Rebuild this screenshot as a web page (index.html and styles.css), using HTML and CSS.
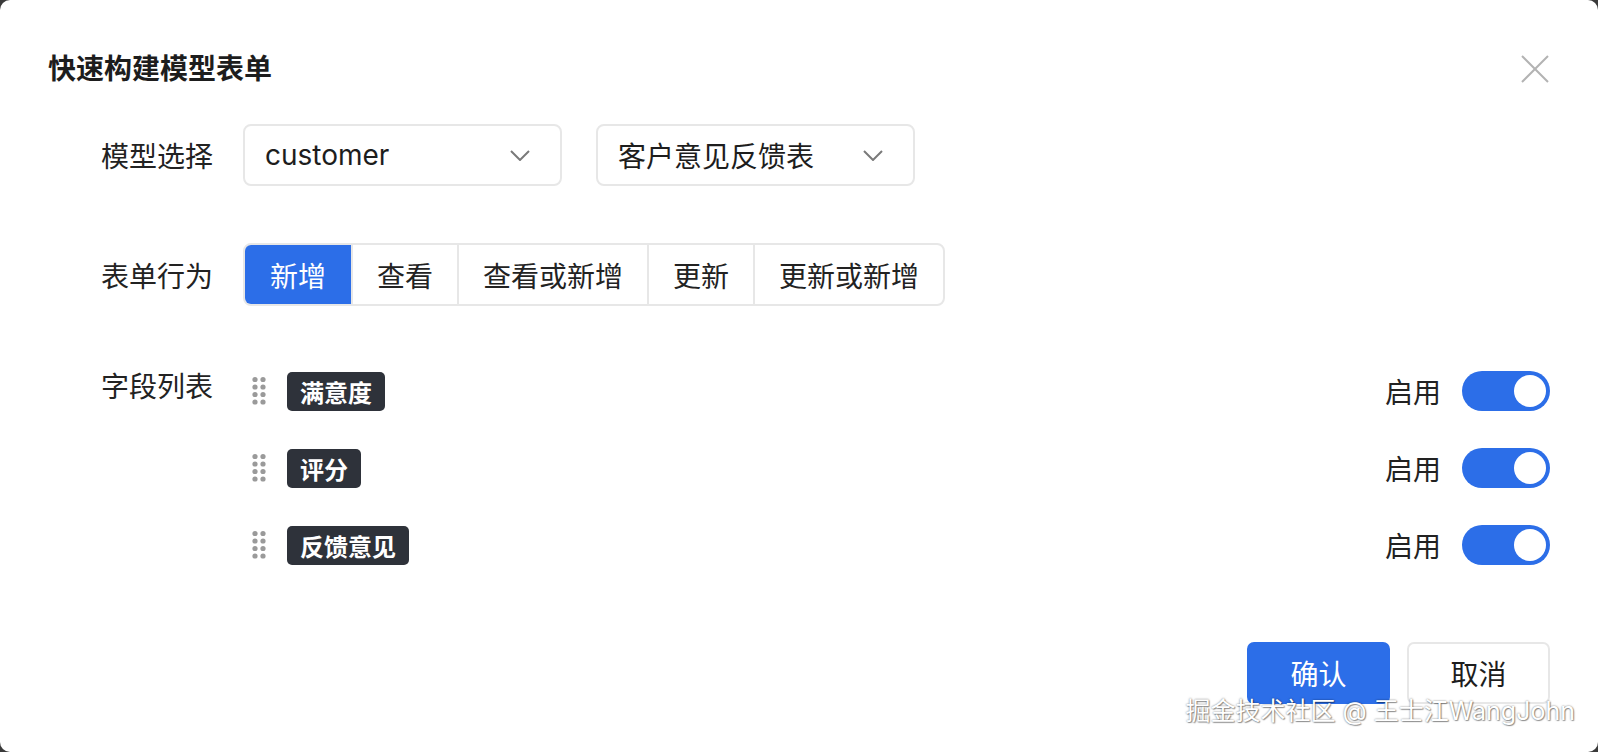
FILE: index.html
```html
<!DOCTYPE html>
<html lang="zh-CN">
<head>
    <meta charset="UTF-8">
    <meta name="viewport" content="width=device-width, initial-scale=1.0">
    <title>快速构建模型表单</title>
    <link rel="stylesheet" href="styles.css">
</head>
<body>
    <div class="dialog">
        <div class="dialog-header">
            <h2 class="dialog-title">快速构建模型表单</h2>
            <button class="close-btn" aria-label="关闭">
                <svg width="28" height="28" viewBox="0 0 28 28"><path d="M1 1L27 27M27 1L1 27" stroke="#b3b3b3" stroke-width="2" fill="none"/></svg>
            </button>
        </div>

        <div class="form">
            <div class="form-row row-select">
                <label class="form-label">模型选择</label>
                <div class="form-control selects">
                    <div class="select">
                        <span>customer</span>
                        <svg class="chevron" width="20" height="11" viewBox="0 0 20 11"><path d="M1 1L10 10L19 1" stroke="#7a7a7a" stroke-width="2" fill="none"/></svg>
                    </div>
                    <div class="select">
                        <span>客户意见反馈表</span>
                        <svg class="chevron" width="20" height="11" viewBox="0 0 20 11"><path d="M1 1L10 10L19 1" stroke="#7a7a7a" stroke-width="2" fill="none"/></svg>
                    </div>
                </div>
            </div>

            <div class="form-row row-action">
                <label class="form-label">表单行为</label>
                <div class="form-control">
                    <div class="segmented">
                        <div class="segment active">新增</div>
                        <div class="segment">查看</div>
                        <div class="segment">查看或新增</div>
                        <div class="segment">更新</div>
                        <div class="segment">更新或新增</div>
                    </div>
                </div>
            </div>

            <div class="form-row row-fields">
                <label class="form-label">字段列表</label>
                <div class="form-control field-list">
                    <div class="field-item">
                        <svg class="handle" width="14" height="30" viewBox="0 0 14 30">
                            <g fill="#9a9a9a"><circle cx="3" cy="3.5" r="2.6"/><circle cx="11" cy="3.5" r="2.6"/><circle cx="3" cy="11" r="2.6"/><circle cx="11" cy="11" r="2.6"/><circle cx="3" cy="18.5" r="2.6"/><circle cx="11" cy="18.5" r="2.6"/><circle cx="3" cy="26" r="2.6"/><circle cx="11" cy="26" r="2.6"/></g>
                        </svg>
                        <span class="tag">满意度</span>
                        <span class="switch-label">启用</span>
                        <span class="switch on"><span class="knob"></span></span>
                    </div>
                    <div class="field-item">
                        <svg class="handle" width="14" height="30" viewBox="0 0 14 30">
                            <g fill="#9a9a9a"><circle cx="3" cy="3.5" r="2.6"/><circle cx="11" cy="3.5" r="2.6"/><circle cx="3" cy="11" r="2.6"/><circle cx="11" cy="11" r="2.6"/><circle cx="3" cy="18.5" r="2.6"/><circle cx="11" cy="18.5" r="2.6"/><circle cx="3" cy="26" r="2.6"/><circle cx="11" cy="26" r="2.6"/></g>
                        </svg>
                        <span class="tag">评分</span>
                        <span class="switch-label">启用</span>
                        <span class="switch on"><span class="knob"></span></span>
                    </div>
                    <div class="field-item">
                        <svg class="handle" width="14" height="30" viewBox="0 0 14 30">
                            <g fill="#9a9a9a"><circle cx="3" cy="3.5" r="2.6"/><circle cx="11" cy="3.5" r="2.6"/><circle cx="3" cy="11" r="2.6"/><circle cx="11" cy="11" r="2.6"/><circle cx="3" cy="18.5" r="2.6"/><circle cx="11" cy="18.5" r="2.6"/><circle cx="3" cy="26" r="2.6"/><circle cx="11" cy="26" r="2.6"/></g>
                        </svg>
                        <span class="tag">反馈意见</span>
                        <span class="switch-label">启用</span>
                        <span class="switch on"><span class="knob"></span></span>
                    </div>
                </div>
            </div>
        </div>

        <div class="dialog-footer">
            <button class="btn btn-primary">确认</button>
            <button class="btn">取消</button>
        </div>

        <div class="watermark">掘金技术社区 @ 王士江WangJohn</div>
    </div>
</body>
</html>
```

FILE: styles.css
```css
body {
    margin: 0;
    padding: 0;
    background-color: #3a3a3a;
    color: #222;
    font-family: Inter, 'Noto Sans CJK SC', sans-serif;
}

.dialog {
    position: relative;
    height: 100vh;
    box-sizing: border-box;
    background-color: #fff;
    border-radius: 10px;
    padding: 49px 48px 48px;
    display: flex;
    flex-direction: column;
}

.dialog-header {
    display: flex;
    justify-content: space-between;
    align-items: center;
    height: 40px;
}

.dialog-title {
    margin: 0;
    font-size: 28px;
    font-weight: 600;
    line-height: 40px;
    color: #1d1d1d;
}

.close-btn {
    border: none;
    background: none;
    padding: 0;
    margin-right: 1px;
    width: 28px;
    height: 28px;
    cursor: pointer;
}

.close-btn svg {
    display: block;
}

.form {
    margin-top: 35px;
    margin-left: 53px;
}

.form-row {
    display: flex;
    align-items: center;
}

.form-label {
    width: 142px;
    flex-shrink: 0;
    font-size: 28px;
    color: #222;
}

.form-control {
    flex: 1;
}

.selects {
    display: flex;
    gap: 34px;
}

.select {
    width: 319px;
    height: 62px;
    box-sizing: border-box;
    border: 2px solid #e7e7e7;
    border-radius: 8px;
    padding: 0 30px 0 20px;
    display: flex;
    align-items: center;
    justify-content: space-between;
    font-size: 28px;
    color: #1d1d1d;
}

.chevron {
    display: block;
}

.row-action {
    margin-top: 57px;
}

.segmented {
    display: inline-flex;
    height: 63px;
    box-sizing: border-box;
    border: 2px solid #e7e7e7;
    border-radius: 8px;
    overflow: hidden;
}

.segment {
    display: flex;
    align-items: center;
    padding: 0 24px;
    font-size: 28px;
    color: #222;
    border-left: 2px solid #e7e7e7;
}

.segment:first-child {
    border-left: none;
    padding: 0 25px;
}

.segment.active {
    background-color: #2c6ee8;
    color: #fff;
}

.row-fields {
    margin-top: 65px;
    align-items: flex-start;
}

.row-fields .form-label {
    line-height: 32px;
}

.field-list {
    display: flex;
    flex-direction: column;
    gap: 37px;
}

.field-item {
    display: flex;
    align-items: center;
    height: 40px;
}

.handle {
    display: block;
    margin-left: 9px;
    margin-right: 21px;
}

.tag {
    display: inline-flex;
    align-items: center;
    height: 39px;
    padding: 0 13px;
    background-color: #2e323a;
    color: #fff;
    font-size: 24px;
    font-weight: 600;
    border-radius: 5px;
}

.switch-label {
    margin-left: auto;
    margin-right: 21px;
    font-size: 28px;
    color: #222;
}

.switch {
    position: relative;
    width: 88px;
    height: 40px;
    border-radius: 20px;
    background-color: #c9c9c9;
}

.switch.on {
    background-color: #2c6ee8;
}

.knob {
    position: absolute;
    top: 4px;
    right: 4px;
    width: 32px;
    height: 32px;
    border-radius: 50%;
    background-color: #fff;
}

.dialog-footer {
    margin-top: auto;
    display: flex;
    justify-content: flex-end;
    gap: 17px;
}

.btn {
    width: 143px;
    height: 62px;
    border: 2px solid #e7e7e7;
    border-radius: 7px;
    background-color: #fff;
    color: #1d1d1d;
    font-family: inherit;
    font-size: 28px;
    cursor: pointer;
}

.btn-primary {
    background-color: #2c6ee8;
    border-color: #2c6ee8;
    color: #fff;
}

.watermark {
    position: absolute;
    right: 23px;
    top: 694px;
    line-height: 34px;
    font-size: 25px;
    color: #fff;
    text-shadow: 0 0 2px rgba(0, 0, 0, 0.55), 1px 1px 1px rgba(0, 0, 0, 0.35);
    white-space: nowrap;
    pointer-events: none;
}
```
